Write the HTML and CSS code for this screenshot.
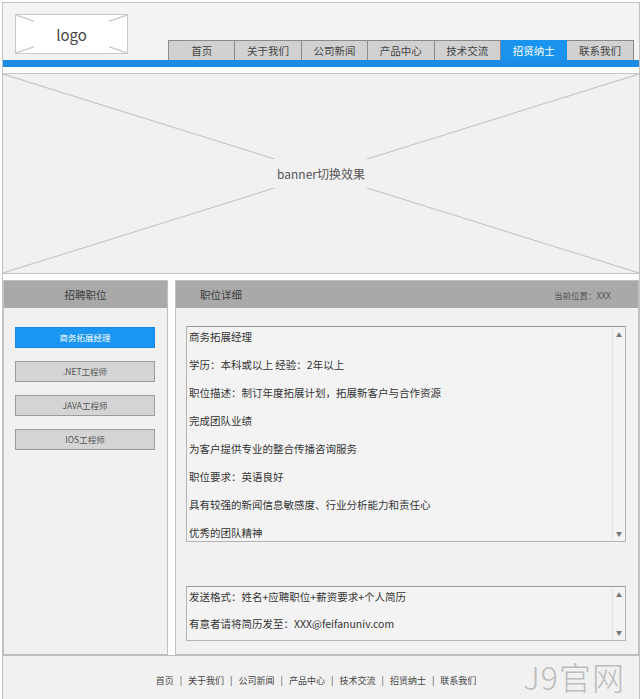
FILE: index.html
```html
<!DOCTYPE html>
<html lang="zh-CN">
<head>
    <meta charset="UTF-8">
    <meta name="viewport" content="width=device-width, initial-scale=1.0">
    <title>招贤纳士</title>
    <link rel="stylesheet" href="styles.css">
</head>
<body>
    <div class="page">
        <div class="header">
            <div class="logo placeholder">
                <svg class="cross" viewBox="0 0 100 100" preserveAspectRatio="none">
                    <line x1="0" y1="0" x2="100" y2="100"></line>
                    <line x1="100" y1="0" x2="0" y2="100"></line>
                </svg>
                <span class="logo-text">logo</span>
            </div>
            <ul class="nav">
                <li>首页</li>
                <li>关于我们</li>
                <li>公司新闻</li>
                <li>产品中心</li>
                <li>技术交流</li>
                <li class="active">招贤纳士</li>
                <li>联系我们</li>
            </ul>
        </div>
        <div class="nav-bar"></div>

        <div class="banner placeholder">
            <svg class="cross" viewBox="0 0 100 100" preserveAspectRatio="none">
                <line x1="0" y1="0" x2="100" y2="100"></line>
                <line x1="100" y1="0" x2="0" y2="100"></line>
            </svg>
            <span class="banner-text">banner切换效果</span>
        </div>

        <div class="main">
            <div class="panel side">
                <div class="panel-head center">招聘职位</div>
                <div class="job-list">
                    <a class="job active">商务拓展经理</a>
                    <a class="job">.NET工程师</a>
                    <a class="job">JAVA工程师</a>
                    <a class="job">IOS工程师</a>
                </div>
            </div>
            <div class="panel detail">
                <div class="panel-head">
                    <span>职位详细</span>
                    <span class="crumb">当前位置：XXX</span>
                </div>
                <div class="text-box desc">
                    <div class="text-body">
                        <p>商务拓展经理</p>
                        <p>学历：本科或以上 经验：2年以上</p>
                        <p>职位描述：制订年度拓展计划，拓展新客户与合作资源</p>
                        <p>完成团队业绩</p>
                        <p>为客户提供专业的整合传播咨询服务</p>
                        <p>职位要求：英语良好</p>
                        <p>具有较强的新闻信息敏感度、行业分析能力和责任心</p>
                        <p>优秀的团队精神</p>
                    </div>
                    <div class="scroll"><span>▲</span><span>▼</span></div>
                </div>
                <div class="text-box contact">
                    <div class="text-body">
                        <p>发送格式：姓名+应聘职位+薪资要求+个人简历</p>
                        <p>有意者请将简历发至：XXX@feifanuniv.com</p>
                    </div>
                    <div class="scroll"><span>▲</span><span>▼</span></div>
                </div>
            </div>
        </div>

        <div class="footer">
            <span>首页</span><i>|</i><span>关于我们</span><i>|</i><span>公司新闻</span><i>|</i><span>产品中心</span><i>|</i><span>技术交流</span><i>|</i><span>招贤纳士</span><i>|</i><span>联系我们</span>
            <span class="mark">J9官网</span>
        </div>
    </div>
</body>
</html>
```

FILE: styles.css
```css
body {
    margin: 0;
    background: #fff;
    font-family: "Noto Sans CJK SC", "Liberation Sans", sans-serif;
    color: #333;
}
.page {
    margin: 2px 2px 0 2px;
    border: 1px solid #c2c2c2;
    border-bottom: none;
    background: #fff;
}
.header {
    height: 57px;
    display: flex;
    align-items: flex-end;
    background: #f3f3f3;
}
.placeholder {
    position: relative;
    display: flex;
    align-items: center;
    justify-content: center;
}
.cross {
    position: absolute;
    left: 0;
    top: 0;
    width: 100%;
    height: 100%;
}
.cross line {
    stroke: #c8c8c8;
    stroke-width: 1.2;
    vector-effect: non-scaling-stroke;
}
.logo {
    align-self: flex-start;
    margin: 11px 0 0 12px;
    width: 111px;
    height: 38px;
    border: 1px solid #c9c9c9;
    background: #fff;
}
.logo-text {
    position: relative;
    background: #fff;
    padding: 7px 22px;
    font-size: 15px;
    color: #444;
}
.nav {
    list-style: none;
    margin: 0 0 0 40px;
    padding: 0;
    display: flex;
    height: 20px;
}
.nav li {
    width: 65.4px;
    height: 19px;
    line-height: 19px;
    text-align: center;
    font-size: 10.5px;
    color: #444;
    background: #d1d1d1;
    border: 1px solid #8a8a8a;
    border-left: none;
    border-bottom: none;
}
.nav li:first-child {
    border-left: 1px solid #8a8a8a;
}
.nav li.active {
    background: #1993ee;
    border-color: #1993ee;
    color: #fff;
}
.nav-bar {
    height: 7px;
    background: #1a8ce6;
}
.banner {
    margin-top: 6px;
    height: 199px;
    border-top: 1px solid #c4c4c4;
    border-bottom: 1px solid #c4c4c4;
    background: #f1f1f1;
}
.banner-text {
    position: relative;
    background: #f1f1f1;
    padding: 6px 6px;
    font-size: 12px;
    color: #555;
}
.main {
    display: flex;
    gap: 7px;
    padding-top: 6px;
}
.panel {
    height: 373px;
    border: 1px solid #c0c0c0;
    background: #f1f1f1;
}
.side {
    width: 163px;
}
.detail {
    flex: 1;
}
.panel-head {
    height: 27px;
    background: #a9a9a9;
    display: flex;
    align-items: center;
    justify-content: space-between;
    padding: 0 27px 0 24px;
    font-size: 10.5px;
    color: #3c3c3c;
}
.panel-head.center {
    justify-content: center;
    padding: 0;
}
.crumb {
    font-size: 8.5px;
    color: #555;
}
.job-list {
    display: flex;
    flex-direction: column;
    gap: 13px;
    padding: 19px 0 0 11px;
}
.job {
    width: 138px;
    height: 19px;
    line-height: 19px;
    text-align: center;
    font-size: 8.5px;
    color: #555;
    background: #d4d4d4;
    border: 1px solid #9c9c9c;
}
.job.active {
    background: #1a96f2;
    border-color: #1a88e0;
    color: #fff;
}
.text-box {
    margin: 0 12px 0 10px;
    display: flex;
    border: 1px solid #b3b3b3;
    border-top-color: #9a9a9a;
    background: #f3f3f3;
}
.desc {
    margin-top: 18px;
    height: 214px;
}
.contact {
    margin-top: 44px;
    height: 53px;
}
.text-body {
    flex: 1;
    padding-left: 2px;
    font-size: 10.5px;
    color: #333;
    overflow: hidden;
}
.text-body p {
    margin: 0 0 8px;
    line-height: 20px;
}
.contact .text-body p {
    margin-bottom: 7px;
}
.scroll {
    width: 12px;
    display: flex;
    flex-direction: column;
    justify-content: space-between;
    align-items: center;
    padding: 3px 0;
    font-size: 6px;
    color: #777;
    border-left: 1px solid #e4e4e4;
}
.footer {
    position: relative;
    height: 44px;
    border-top: 1px solid #bdbdbd;
    background: #f1f1f1;
    display: flex;
    justify-content: center;
    align-items: center;
    padding: 6px 10px 0 0;
    box-sizing: border-box;
    font-size: 9px;
    color: #444;
}
.footer i {
    font-style: normal;
    margin: 0 6px;
}
.footer .mark {
    position: absolute;
    right: 14px;
    bottom: 0;
    font-size: 32px;
    font-weight: 300;
    color: #bdbdbd;
    letter-spacing: 1px;
}
```
